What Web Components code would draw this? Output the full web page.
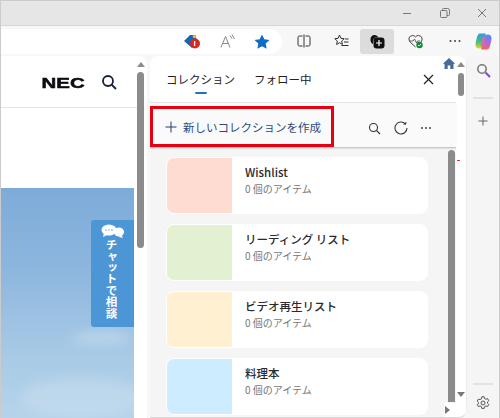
<!DOCTYPE html>
<html lang="ja"><head><meta charset="utf-8"><title>コレクション</title>
<style>
html,body{margin:0;height:100%;overflow:hidden;background:#f5f5f5;font-family:"Noto Sans CJK JP","Noto Sans",sans-serif}
</style></head><body>
<browser-window>
  <title-bar slot="title"></title-bar>
  <tool-bar slot="tools"></tool-bar>
  <page-view slot="page"></page-view>
  <collections-panel slot="panel">
    <collection-card color="#ffdcd2" name="Wishlist"></collection-card>
    <collection-card color="#e4f0d2" name="リーディング リスト"></collection-card>
    <collection-card color="#fff0d2" name="ビデオ再生リスト"></collection-card>
    <collection-card color="#cdecff" name="料理本"></collection-card>
  </collections-panel>
  <side-rail slot="rail"></side-rail>
</browser-window>
<script>
const def=(name,html)=>{customElements.define(name,class extends HTMLElement{
  constructor(){super();const s=this.attachShadow({mode:'open'});
    s.innerHTML=typeof html==='function'?html(this):html;}
})};

def('browser-window',`<style>
:host{display:flex;flex-direction:column;width:500px;height:418px;box-sizing:border-box;border:1px solid #cbcbcb;border-bottom:0;overflow:hidden;background:#f7f7f7}
.main{flex:1;display:flex;min-height:0}
</style><slot name="title"></slot><slot name="tools"></slot>
<div class="main"><slot name="page"></slot><slot name="panel"></slot><slot name="rail"></slot></div>`);

def('title-bar',`<style>
:host{display:flex;justify-content:flex-end;align-items:center;height:25px;box-sizing:border-box;flex:none;background:#e6e6e6;border-bottom:1px solid #d6d6d6;color:#777}
svg{display:block}
span{width:38px;display:flex;justify-content:center}
</style>
<span><svg width="10" height="10" viewBox="0 0 10 10"><path d="M1 5.500h8" stroke="#777" fill="none"/></svg></span>
<span><svg width="10" height="10" viewBox="0 0 10 10" fill="none" stroke="#777"><rect x=".5" y="2.500" width="6.500" height="7" rx="1"/><path d="M2.500 2.500V1.500q0-1 1-1h4q2 0 2 2v4q0 1-1 1H7"/></svg></span>
<span style="margin-right:-2px;margin-left:-1px"><svg width="10" height="10" viewBox="0 0 10 10"><path d="M1 1l8 8M9 1l-8 8" stroke="#777" fill="none"/></svg></span>`);

def('tool-slot',`<style>
:host{display:flex;align-items:center;justify-content:center;width:34px;height:25px;flex:none;border-radius:3px}
:host([active]){background:#dcdcdc}
</style><slot></slot>`);

def('tool-bar',`<style>
:host{display:flex;align-items:center;height:30px;flex:none;background:#f7f7f7}
.pill{width:281px;height:25px;background:#fff;border-radius:0 13px 13px 0;display:flex;align-items:center;justify-content:flex-end;padding-right:3px;box-sizing:border-box;flex:none}
svg{display:block}
</style>
<div class="pill">
 <tool-slot style="margin-right:2px"><svg width="18" height="16" viewBox="0 0 18 16"><path d="M1 8l6-6h6v2l1 6-5 5z" fill="#1565b8"/><circle cx="11.500" cy="3.500" r="1.800" fill="#e8b84a"/><circle cx="12" cy="10.500" r="5" fill="#d8281f"/><path d="M11.600 8v5" stroke="#fff" stroke-width="1.300"/></svg></tool-slot>
 <tool-slot><svg width="18" height="16" viewBox="0 0 18 16" fill="none" stroke="#8a8a8a"><path d="M2 14.500 6.500 3.500 11 14.500M3.700 10.500h5.600"/><path d="M11 2.500l2 3M13 1.500l2.500 4.500"/></svg></tool-slot>
 <tool-slot><svg width="16" height="15" viewBox="0 0 16 15"><path d="M8 .5l2.300 4.800 5.200.7-3.800 3.600.95 5.200L8 12.300 3.350 14.800l.95-5.200L.5 6l5.200-.7z" fill="#0f6cc4"/></svg></tool-slot>
</div>
<tool-slot style="margin-left:5px"><svg width="14" height="14" viewBox="0 0 14 14" fill="none" stroke="#333"><path d="M7 .5v13M5.500 2H2.500q-1.500 0-1.500 1.500v7q0 1.500 1.500 1.500h3M8.500 2h3q1.500 0 1.500 1.500v7q0 1.500-1.500 1.500h-3"/></svg></tool-slot>
<tool-slot style="margin-left:3px"><svg width="15" height="14" viewBox="0 0 15 14" fill="none" stroke="#333"><path d="M5.500 1l1.400 3.300 3.300.4-2.500 2.300.7 3.500-2.900-1.800L2.600 10.500l.7-3.500L.8 4.700l3.300-.4z"/><path d="M11 5h3.500M10 8h4.500M7.500 11.500h7"/></svg></tool-slot>
<tool-slot active style="margin-left:2px"><svg width="16" height="15" viewBox="0 0 16 15"><path d="M1.500 6.500Q1 1 6 1q2 0 3.500 2.500H6.500Q3.500 4 4 10Q2 9.500 1.500 6.500z" fill="#111"/><rect x="4.500" y="3.500" width="11" height="11" rx="3" fill="#111"/><path d="M10 6v6M7 9h6" stroke="#fff" stroke-width="1.200"/></svg></tool-slot>
<tool-slot style="margin-left:5px"><svg width="16" height="15" viewBox="0 0 16 15"><path d="M7.500 13 2 8Q.5 6 1 4 2 1.500 4.500 1.500 6.500 1.500 7.500 3 8.500 1.500 10.500 1.500 13 1.500 14 4q.5 2-1 4" fill="none" stroke="#444"/><path d="M2 7h3l1.500-2 2 4 1-2H12" fill="none" stroke="#444" stroke-width=".8"/><circle cx="11.500" cy="11" r="3.200" fill="#158a3c"/><path d="M10 11l1 1 2-2" stroke="#fff" fill="none" stroke-width=".8"/></svg></tool-slot>
<tool-slot style="margin-left:5px"><svg width="14" height="4" viewBox="0 0 14 4"><g fill="#444"><circle cx="2.500" cy="2" r="1"/><circle cx="7" cy="2" r="1"/><circle cx="11.500" cy="2" r="1"/></g></svg></tool-slot>
<tool-slot style="width:20px;margin-left:1px"><svg width="17" height="17" viewBox="0 0 17 17"><defs>
<linearGradient id="c1" x1="0" y1="0" x2="0" y2="1"><stop offset="0" stop-color="#2f9be8"/><stop offset=".55" stop-color="#37c47d"/><stop offset="1" stop-color="#f5cc2e"/></linearGradient>
<linearGradient id="c2" x1="0" y1="0" x2="0" y2="1"><stop offset="0" stop-color="#3f8ff0"/><stop offset=".5" stop-color="#a56ae8"/><stop offset="1" stop-color="#f4684c"/></linearGradient></defs>
<path d="M5 .5h6L7.500 13q-.7 2.500-3 2.500-4 0-4-4 0-1.500 1-5.500Q2.500.5 5 .5z" fill="url(#c1)"/>
<path d="M12 16.500H6L9.500 4q.7-2.500 3-2.500 4 0 4 4 0 1.500-1 5.500-1 5.500-3.500 5.500z" fill="url(#c2)"/>
<path d="M7.500 3.500h3.500L9 13.500H5.500z" fill="#ee5fae" opacity=".75"/></svg></tool-slot>`);

def('page-view',`<style>
:host{display:flex;width:146px;flex:none;background:#fff;border-radius:0 8px 0 0;margin-right:3px;position:relative}
.col{width:136px;flex:none;display:flex;flex-direction:column}
.head{height:52px;box-sizing:border-box;border-bottom:1px solid #e4e4e4;display:flex;align-items:center;justify-content:flex-end;padding:0 20px 0 0;gap:16px;flex:none}
.nec{font:700 15px/1 "Liberation Sans",sans-serif;color:#0b0b12;transform:scaleX(1.36);transform-origin:right center;-webkit-text-stroke:.5px #0b0b12;margin-top:1px}
.spacer{height:80px;flex:none}
.hero{flex:1;width:133px;position:relative;background:linear-gradient(180deg,#7dabd8 0,#8db6de 35%,#a9cbe6 75%,#b6d3ea 100%);overflow:hidden}
.cloud{position:absolute;border-radius:50%;background:#cfe1f0;filter:blur(6px)}
.chat{position:absolute;right:0;top:32px;width:43px;height:107px;background:#4c96d6;border-radius:3px 0 0 3px;display:flex;flex-direction:column;align-items:center;padding:4px 2px 0 0;box-sizing:border-box;color:#fff}
.chat b{writing-mode:vertical-rl;font:700 11.500px/14px "Noto Sans CJK JP",sans-serif;letter-spacing:-.1px;margin-top:1px}
svg{display:block}
.bar{width:10px;flex:none;display:flex;flex-direction:column;align-items:flex-start}
.up{width:0;height:0;border:4px solid transparent;border-top:0;border-bottom:5px solid #8a8a8a;margin:6px 0 5px}
.thumb{width:7px;height:176px;border-radius:4px;background:#8b8b8b}
</style>
<div class="col">
 <div class="head"><span class="nec">NEC</span>
 <svg width="16" height="16" viewBox="0 0 16 16" fill="none" stroke="#152238" stroke-width="1.800"><circle cx="7" cy="7" r="5"/><path d="M10.500 10.500 15 15"/></svg></div>
 <div class="spacer"></div>
 <div class="hero">
  <div class="cloud" style="left:70px;bottom:74px;width:60px;height:12px;opacity:.6"></div>
  <div class="cloud" style="left:20px;bottom:0;width:120px;height:40px;opacity:.45"></div>
  <div class="chat">
   <svg width="24" height="14" viewBox="0 0 24 14"><ellipse cx="9" cy="6" rx="7.500" ry="5.500" fill="#fff"/><path d="M4 9l-1 4 4-2z" fill="#fff"/><ellipse cx="19" cy="8" rx="5" ry="4.500" fill="#fff"/><path d="M21 11l2 3-4-1z" fill="#fff"/><g fill="#4c96d6"><circle cx="6" cy="6" r=".7"/><circle cx="9" cy="6" r=".7"/><circle cx="12" cy="6" r=".7"/></g></svg>
   <b>チャットで相談</b>
  </div>
 </div>
</div>
<div class="bar"><div class="up"></div><div class="thumb"></div></div>`);

def('collection-card',h=>`<style>
:host{display:flex;height:57px;flex:none;width:262px;background:#fff;border:1px solid #fff;box-sizing:border-box;border-radius:8px;overflow:hidden}
.sw{width:65px;flex:none;background:${h.getAttribute('color')}}
.tx{padding:6px 0 0 13px;display:flex;flex-direction:column;gap:2px}
.n{font:500 11.500px/16px "Noto Sans CJK JP","Noto Sans",sans-serif;color:#2a2a2a}
.s{font:400 10px/14px "Noto Sans CJK JP","Noto Sans",sans-serif;color:#777}
</style><div class="sw"></div><div class="tx"><div class="n">${h.getAttribute('name')}</div><div class="s">0 個のアイテム</div></div>`);

def('collections-panel',`<style>
:host{display:flex;width:317px;flex:none;background:#fff;border-radius:8px 8px 8px 0;position:relative;overflow:hidden;border-right:1px solid #ededed;border-bottom:1px solid #d8d8d8;box-sizing:border-box}
.body{width:306px;flex:none;display:flex;flex-direction:column;position:relative}
.head{height:47px;flex:none;box-sizing:border-box;border-bottom:1px solid #e6e6e6;display:flex;align-items:flex-start;padding:15px 0 0 16px;gap:19px;font:400 11.500px/16px "Noto Sans CJK JP",sans-serif;color:#222}
.tab{display:flex;flex-direction:column;align-items:center;gap:5px}
.tab i{width:12px;height:2px;background:#2a70b8;border-radius:1px}
.x{margin-left:auto;margin-right:22px;margin-top:3px}
svg{display:block}
.home{position:absolute;right:1px;top:2px}
.acts{height:45px;flex:none;background:#fafafa;border-bottom:1px solid #c9c9c9;box-shadow:0 1px 1px #e2e2e2;display:flex;align-items:flex-start;box-sizing:border-box;position:relative;z-index:1}
.new{width:184px;height:41px;box-sizing:border-box;border:3px solid #e60012;margin-top:3px;display:flex;align-items:center;padding-left:12px;gap:6px;font:400 11.500px/16px "Noto Sans CJK JP",sans-serif;color:#2b4a7a;white-space:nowrap;flex:none}
.tools{display:flex;align-items:center;gap:13px;margin:18px 0 0 34px}
.tools .dots{margin-left:-1px}
.list{flex:1;background:#f5f5f5;display:flex;min-height:0;overflow:hidden}
.cards{flex:1;padding:9px 0 0 16px;display:flex;flex-direction:column;gap:10px}
.sb{width:7px;height:252px;flex:none;background:#8b8b8b;margin:2px 1px 0 0;border-radius:4px 4px 0 0}
.gut{width:10px;flex:none;display:flex;flex-direction:column;align-items:center;position:relative}
.up{width:0;height:0;border:4px solid transparent;border-top:0;border-bottom:5px solid #8a8a8a;margin:6px 0}
.th{width:6px;height:23px;border-radius:3px;background:#8b8b8b}
.down{position:absolute;left:1px;top:336px;width:0;height:0;border:4px solid transparent;border-bottom:0;border-top:5px solid #777}
.red{position:absolute;left:1px;top:104px;width:3px;height:1px;background:#f03030}
.corner{position:absolute;right:0;bottom:0;width:12px;height:14px;background:#fff;z-index:2;display:flex;align-items:center}
.hz{width:0;height:0;border:4px solid transparent;border-right:0;border-left:5px solid #777;margin-left:1px}
</style>
<div class="body">
 <div class="head">
  <div class="tab"><span>コレクション</span><i></i></div>
  <div class="tab"><span>フォロー中</span></div>
  <svg class="x" width="11" height="11" viewBox="0 0 11 11"><path d="M1 1l9 9M10 1l-9 9" stroke="#222" stroke-width="1.200" fill="none"/></svg>
 </div>
 <svg class="home" width="12" height="11" viewBox="0 0 12 11"><path d="M6 0 0 5.500 1.500 6v5h3.200V7.500h2.600V11h3.200V6L12 5.500z" fill="#4a6a9c"/></svg>
 <div class="acts">
  <div class="new"><svg width="12" height="12" viewBox="0 0 12 12"><path d="M6 .5v11M.5 6h11" stroke="#1f3f70" fill="none"/></svg><span>新しいコレクションを作成</span></div>
  <div class="tools">
   <svg width="13" height="13" viewBox="0 0 13 13" fill="none" stroke="#333" stroke-width="1.100"><circle cx="5.500" cy="5.500" r="4"/><path d="M8.500 8.500 12 12"/></svg>
   <svg width="14" height="14" viewBox="0 0 14 14" fill="none" stroke="#333" stroke-width="1.100"><path d="M11.300 2.800A6 6 0 1 0 13 7"/><path d="M12.500.7 12 3.700 9 3.200z" fill="#333" stroke="none"/></svg>
   <svg class="dots" width="12" height="4" viewBox="0 0 12 4"><g fill="#444"><circle cx="2" cy="2" r="1"/><circle cx="6" cy="2" r="1"/><circle cx="10" cy="2" r="1"/></g></svg>
  </div>
 </div>
 <div class="list"><div class="cards"><slot></slot></div><div class="sb"></div></div>
 <div class="corner"><div class="hz"></div></div>
</div>
<div class="gut"><div class="up"></div><div class="th"></div><div class="red"></div><div class="down"></div></div>`);

def('side-rail',`<style>
:host{flex:1;display:flex;flex-direction:column;align-items:center;background:#f5f5f5;padding-top:7px;position:relative}
svg{display:block}
hr{width:20px;height:2px;border:0;background:#e2e2e2;margin:0}
.sp{flex:1}
</style>
<svg width="15" height="15" viewBox="0 0 15 15" fill="none"><circle cx="6" cy="6" r="4.200" stroke="#7a7a7a" stroke-width="1.600"/><path d="M9.500 9.500 14 14" stroke="#7a4fc0" stroke-width="2"/></svg>
<hr style="margin-top:19px">
<svg style="margin-top:17px" width="10" height="10" viewBox="0 0 10 10"><path d="M5 .5v9M.5 5h9" stroke="#666" fill="none"/></svg>
<div class="sp"></div>
<hr>
<svg style="margin:11px 0 8px" width="14" height="14" viewBox="0 0 14 14" fill="none" stroke="#555"><path d="M5.800.8h2.400l.4 1.700 1.300.7 1.700-.5 1.200 2-1.300 1.200v1.400l1.300 1.200-1.200 2-1.700-.5-1.300.7-.4 1.700H5.800l-.4-1.700-1.300-.7-1.700.5-1.200-2L2.500 7.700V6.300L1.200 5.100l1.200-2 1.700.5 1.300-.7z"/><circle cx="7" cy="7" r="2"/></svg>`);
</script>
</body></html>
